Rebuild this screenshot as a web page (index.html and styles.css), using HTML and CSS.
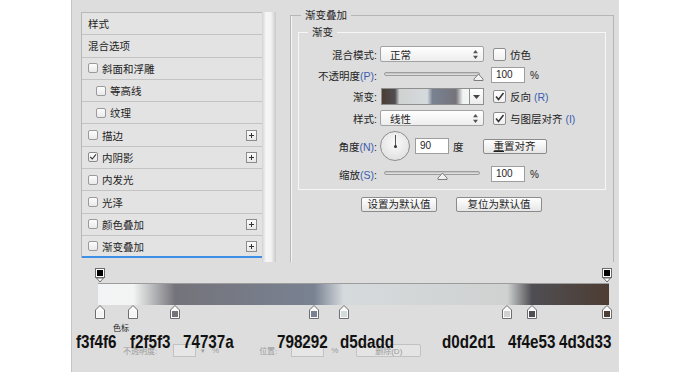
FILE: index.html
```html
<!DOCTYPE html>
<html lang="zh-CN">
<head>
<meta charset="utf-8">
<title>图层样式 - 渐变叠加</title>
<link rel="stylesheet" href="styles.css">
</head>
<body>
<div class="panel">
  <div class="top">
    <div class="list">
      <div class="row">样式</div>
      <div class="row">混合选项</div>
      <div class="row"><span class="cb"></span>斜面和浮雕</div>
      <div class="row ind"><span class="cb"></span>等高线</div>
      <div class="row ind"><span class="cb"></span>纹理</div>
      <div class="row"><span class="cb"></span>描边<span class="plus"></span></div>
      <div class="row"><span class="cb on"><svg width="10" height="10" viewBox="0 0 10 10"><path d="M1.5 4.8 L4 7.5 L8.8 1.8" fill="none" stroke="#333" stroke-width="1.4"/></svg></span>内阴影<span class="plus"></span></div>
      <div class="row"><span class="cb"></span>内发光</div>
      <div class="row"><span class="cb"></span>光泽</div>
      <div class="row"><span class="cb"></span>颜色叠加<span class="plus"></span></div>
      <div class="row sel"><span class="cb"></span>渐变叠加<span class="plus"></span></div>
    </div>
    <div class="vscroll"></div>
    <fieldset class="outer">
      <legend class="lg">渐变叠加</legend>
      <fieldset class="inner">
        <legend class="lg2">渐变</legend>
        <div class="frow">
          <span class="lb">混合模式:</span>
          <span class="select"><span class="sv">正常</span><svg class="arr" width="5" height="9" viewBox="0 0 5 9"><path d="M2.5 0 L5 3.2 H0 Z M2.5 9 L5 5.8 H0 Z" fill="#555"/></svg></span>
          <span class="chk"></span><span class="ct">仿色</span>
        </div>
        <div class="frow">
          <span class="lb">不透明度<span class="mn">(P)</span>:</span>
          <span class="slider"><span class="track"></span><svg class="thumb t-end" width="11" height="8" viewBox="0 0 11 8"><path d="M1 7.5 H10 V6 L5.5 1 L1 6 Z" fill="#f2f2f2" stroke="#7c7c7c"/></svg></span>
          <span class="inp">100</span><span class="pct">%</span>
        </div>
        <div class="frow r3">
          <span class="lb">渐变:</span>
          <span class="gpre"></span><span class="gdrop"><svg width="7" height="4" viewBox="0 0 7 4"><path d="M0 0 H7 L3.5 4 Z" fill="#444"/></svg></span>
          <span class="chk"><svg width="11" height="11" viewBox="0 0 11 11"><path d="M2 5.5 L4.5 8.5 L9.5 2" fill="none" stroke="#333" stroke-width="1.5"/></svg></span><span class="ct">反向 <span class="mn">(R)</span></span>
        </div>
        <div class="frow">
          <span class="lb">样式:</span>
          <span class="select"><span class="sv">线性</span><svg class="arr" width="5" height="9" viewBox="0 0 5 9"><path d="M2.5 0 L5 3.2 H0 Z M2.5 9 L5 5.8 H0 Z" fill="#555"/></svg></span>
          <span class="chk"><svg width="11" height="11" viewBox="0 0 11 11"><path d="M2 5.5 L4.5 8.5 L9.5 2" fill="none" stroke="#333" stroke-width="1.5"/></svg></span><span class="ct">与图层对齐 <span class="mn">(I)</span></span>
        </div>
        <div class="frow r5">
          <span class="lb">角度<span class="mn">(N)</span>:</span>
          <span class="dial"><span class="hand"></span><span class="dot"></span></span>
          <span class="inp i2">90</span><span class="deg">度</span>
          <span class="btn b0"><u>重</u>置对齐</span>
        </div>
        <div class="frow last">
          <span class="lb">缩放<span class="mn">(S)</span>:</span>
          <span class="slider"><span class="track"></span><svg class="thumb t-mid" width="11" height="8" viewBox="0 0 11 8"><path d="M1 7.5 H10 V6 L5.5 1 L1 6 Z" fill="#f2f2f2" stroke="#7c7c7c"/></svg></span>
          <span class="inp">100</span><span class="pct">%</span>
        </div>
      </fieldset>
      <div class="defaults">
        <span class="btn b1">设置为默认值</span>
        <span class="btn b2">复位为默认值</span>
      </div>
    </fieldset>
  </div>

  <div class="editor">
    <div class="ostops">
      <svg class="ostop" style="left:0.3%" width="10" height="15" viewBox="0 0 10 15"><rect x="0.5" y="0.5" width="9" height="9" fill="#fff" stroke="#6a6a6a"/><rect x="2" y="2" width="6" height="6" fill="#000"/><path d="M1.5 10 L5 14 L8.5 10 Z" fill="#fff" stroke="#6a6a6a"/></svg>
      <svg class="ostop" style="left:99.7%" width="10" height="15" viewBox="0 0 10 15"><rect x="0.5" y="0.5" width="9" height="9" fill="#fff" stroke="#6a6a6a"/><rect x="2" y="2" width="6" height="6" fill="#000"/><path d="M1.5 10 L5 14 L8.5 10 Z" fill="#fff" stroke="#6a6a6a"/></svg>
    </div>
    <div class="gbar"></div>
    <div class="cstops">
      <svg class="cstop" style="left:0.3%" width="10" height="14" viewBox="0 0 10 14"><path d="M0.5 5 L5 0.5 L9.5 5 V13.5 H0.5 Z" fill="#fafafa" stroke="#6e6e6e"/><rect x="2" y="6" width="6" height="6" fill="#f3f4f6"/></svg>
      <svg class="cstop" style="left:6.9%" width="10" height="14" viewBox="0 0 10 14"><path d="M0.5 5 L5 0.5 L9.5 5 V13.5 H0.5 Z" fill="#fafafa" stroke="#6e6e6e"/><rect x="2" y="6" width="6" height="6" fill="#f2f5f3"/></svg>
      <svg class="cstop" style="left:15.1%" width="10" height="14" viewBox="0 0 10 14"><path d="M0.5 5 L5 0.5 L9.5 5 V13.5 H0.5 Z" fill="#fafafa" stroke="#6e6e6e"/><rect x="2" y="6" width="6" height="6" fill="#74737a"/></svg>
      <svg class="cstop" style="left:42.3%" width="10" height="14" viewBox="0 0 10 14"><path d="M0.5 5 L5 0.5 L9.5 5 V13.5 H0.5 Z" fill="#fafafa" stroke="#6e6e6e"/><rect x="2" y="6" width="6" height="6" fill="#798292"/></svg>
      <svg class="cstop" style="left:48.1%" width="10" height="14" viewBox="0 0 10 14"><path d="M0.5 5 L5 0.5 L9.5 5 V13.5 H0.5 Z" fill="#fafafa" stroke="#6e6e6e"/><rect x="2" y="6" width="6" height="6" fill="#d5dadd"/></svg>
      <svg class="cstop" style="left:80.1%" width="10" height="14" viewBox="0 0 10 14"><path d="M0.5 5 L5 0.5 L9.5 5 V13.5 H0.5 Z" fill="#fafafa" stroke="#6e6e6e"/><rect x="2" y="6" width="6" height="6" fill="#d0d2d1"/></svg>
      <svg class="cstop" style="left:84.9%" width="10" height="14" viewBox="0 0 10 14"><path d="M0.5 5 L5 0.5 L9.5 5 V13.5 H0.5 Z" fill="#fafafa" stroke="#6e6e6e"/><rect x="2" y="6" width="6" height="6" fill="#4f4e53"/></svg>
      <svg class="cstop" style="left:99.7%" width="10" height="14" viewBox="0 0 10 14"><path d="M0.5 5 L5 0.5 L9.5 5 V13.5 H0.5 Z" fill="#fafafa" stroke="#6e6e6e"/><rect x="2" y="6" width="6" height="6" fill="#4d3d33"/></svg>
    </div>
    <div class="faded">
      <span class="fl">不透明度:</span><span class="fi"></span><span class="fdd">▾</span><span class="fp">%</span>
      <span class="fl f2">位置:</span><span class="fi fi2"></span><span class="fp">%</span>
      <span class="fb">删除(D)</span>
    </div>
    <div class="tags">
      <span class="small">色标</span>
      <span class="tag" style="left:4px">f3f4f6</span>
      <span class="tag" style="left:58px">f2f5f3</span>
      <span class="tag" style="left:111px">74737a</span>
      <span class="tag" style="left:205px">798292</span>
      <span class="tag" style="left:268px">d5dadd</span>
      <span class="tag" style="left:370px">d0d2d1</span>
      <span class="tag" style="left:436px">4f4e53</span>
      <span class="tag" style="left:487px">4d3d33</span>
    </div>
  </div>
</div>
</body>
</html>
```

FILE: styles.css
```css
* { box-sizing: border-box; }
html, body { margin: 0; padding: 0; background: #fff; }
body {
  width: 690px; height: 372px; overflow: hidden;
  font-family: "Liberation Sans", "Noto Sans CJK SC", sans-serif;
  font-size: 10.5px; color: #1e1e1e;
}
.panel {
  margin-left: 71px; width: 548px; height: 372px;
  background: #dddddd; border-left: 1px solid #c4c4c4;
  display: flex; flex-direction: column;
}
.top { height: 262px; flex: none; display: flex; padding: 8px 0 0 9px; }

/* style list */
.list {
  width: 181px; margin-top: 4px; align-self: flex-start;
  border-left: 1px solid #b8b8b8; border-top: 1px solid #b8b8b8;
  background: #e3e3e3;
}
.row {
  height: 22.3px; border-bottom: 1px solid #c3c3c3;
  display: flex; align-items: center; padding-left: 6px; white-space: nowrap;
}
.row.ind { padding-left: 14px; }
.row.sel { border-bottom: 2px solid #3d8fe8; }
.cb {
  width: 10px; height: 10px; border: 1px solid #9a9a9a; border-radius: 2px;
  background: linear-gradient(#fdfdfd, #e9e9e9); margin-right: 4px; flex: none;
  display: flex; align-items: center; justify-content: center;
}
.cb.on { border-color: #8a8a8a; }
.cb svg { display: block; }
.plus {
  margin-left: auto; margin-right: 5px; width: 11px; height: 11px;
  border: 1px solid #8c8c8c; background: linear-gradient(#fbfbfb, #e8e8e8); position: relative;
}
.plus::before, .plus::after { content: ""; position: absolute; background: #333; }
.plus::before { left: 2px; top: 4px; width: 5px; height: 1px; }
.plus::after { left: 4px; top: 2px; width: 1px; height: 5px; }

.vscroll {
  width: 14px; margin-top: 4px;
  background: linear-gradient(90deg, #d2d2d2, #f7f7f7 30%, #f2f2f2 65%, #c8c8c8);
}

/* fieldsets */
.outer {
  margin: 0 0 0 14px; width: 324px; padding: 0; min-width: 0;
  border: 1px solid #b6b6b6; border-bottom: 0;
  box-shadow: 1px 0 0 #f4f4f4 inset;
}
.lg { margin-left: 10px; padding: 0 4px; line-height: 14px; }
.inner {
  margin: 3px 7px 0 7px; padding: 7px 0 7px 0; min-width: 0;
  border: 1px solid #f6f6f6;
}
.lg2 { margin-left: 9px; padding: 0 4px; line-height: 14px; }
.mn { color: #3b5cae; }

.frow { display: flex; align-items: center; height: 16px; margin-bottom: 5px; white-space: nowrap; }
.frow.r3 { height: 17px; }
.frow.r5 { height: 30px; }
.frow.last { margin-bottom: 0; }
.lb { width: 81px; text-align: right; padding-right: 3px; flex: none; }

.select {
  width: 104px; height: 16px; flex: none;
  border: 1px solid #a2a2a2; border-radius: 2px;
  background: linear-gradient(#ffffff, #ededed);
  display: flex; align-items: center; padding: 0 5px 0 9px;
}
.sv { flex: 1; }
.arr { display: block; }
.chk {
  width: 13px; height: 13px; margin-left: 9px; flex: none;
  border: 1px solid #8d8d8d; border-radius: 2px; background: linear-gradient(#fff, #efefef);
  display: flex; align-items: center; justify-content: center;
}
.chk svg { display: block; }
.ct { margin-left: 4px; }

.slider { width: 104px; height: 16px; flex: none; position: relative; }
.track {
  position: absolute; left: 4px; right: 4px; top: 5px; height: 4px;
  border: 1px solid #9d9d9d; border-radius: 2px;
  background: linear-gradient(#bdbdbd, #e6e6e6);
}
.thumb { position: absolute; top: 6px; display: block; }
.t-end { left: 93px; }
.t-mid { left: 57px; }

.inp {
  width: 34px; height: 16px; margin-left: 7px; flex: none;
  border: 1px solid #9d9d9d; background: #fff;
  font-family: "Liberation Sans", sans-serif; font-size: 10px;
  padding-left: 4px; line-height: 14px;
}
.inp.i2 { margin-left: 5px; }
.pct { margin-left: 5px; font-size: 10px; }
.deg { margin-left: 4px; }

.gpre {
  width: 89px; height: 17px; margin-left: 1px; flex: none;
  border: 1px solid #8f8f8f;
  background: linear-gradient(90deg, #4d3d33 0%, #4f4e53 15%, #d0d2d1 20%, #d5dadd 52%, #798292 58%, #74737a 85%, #f2f5f3 93%, #f3f4f6 100%);
}
.gdrop {
  width: 14px; height: 17px; flex: none; border: 1px solid #8f8f8f; border-left: 0;
  background: linear-gradient(#fff, #ececec);
  display: flex; align-items: center; justify-content: center;
}
.gdrop svg { display: block; }

.dial {
  width: 30px; height: 30px; flex: none; border-radius: 50%;
  border: 1px solid #8e8e8e;
  background: radial-gradient(circle at 50% 40%, #fbfbfb, #e2e2e2 75%);
  position: relative;
}
.hand { position: absolute; left: 14px; top: 3px; width: 1px; height: 11px; background: #555; }
.dot { position: absolute; left: 13px; top: 13px; width: 3px; height: 3px; background: #333; border-radius: 50%; }

.btn {
  height: 15px; flex: none; border: 1px solid #8b8b8b; border-radius: 2px;
  background: linear-gradient(#ffffff, #e6e6e6);
  display: flex; align-items: center; justify-content: center;
  line-height: 13px;
}
.btn u { text-decoration: underline; }
.b0 { width: 64px; margin-left: 19px; }
.defaults { display: flex; padding-left: 70px; margin-top: 7px; gap: 19px; }
.b1 { width: 76px; }
.b2 { width: 86px; }

/* gradient editor */
.editor { flex: 1; position: relative; padding-left: 26px; }
.ostops { width: 511px; height: 15px; margin-top: 6px; position: relative; }
.ostop { position: absolute; top: 0; transform: translateX(-50%); display: block; }
.gbar {
  width: 511px; height: 22px;
  border-top: 1px solid #9c9c9c;
  background: linear-gradient(90deg, #f3f4f6 0.3%, #f2f5f3 6.9%, #74737a 15.1%, #798292 42.3%, #d5dadd 48.1%, #d0d2d1 80.1%, #4f4e53 84.9%, #4d3d33 99.7%);
}
.cstops { width: 511px; height: 14px; position: relative; }
.cstop { position: absolute; top: 0; transform: translateX(-50%); display: block; }

.faded {
  display: flex; align-items: center; margin-top: 25px; padding-left: 25px;
  height: 13px; font-size: 8px; color: #9a9a9a; white-space: nowrap;
}
.fl { width: 40px; }
.fi { width: 23px; height: 13px; border: 1px solid #c2c2c2; background: #e6e6e6; margin-left: 10px; }
.fi2 { width: 33px; margin-left: 7px; }
.fdd { margin-left: 5px; font-size: 7px; }
.fp { margin-left: 7px; }
.f2 { margin-left: 40px; width: 25px; }
.fb {
  margin-left: 18px; width: 65px; height: 13px; border: 1px solid #c2c2c2; border-radius: 2px;
  background: #e4e4e4; display: flex; align-items: center; justify-content: center;
}

.tags { position: absolute; left: 0; top: 0; right: 0; bottom: 0; pointer-events: none; }
.tag {
  position: absolute; top: 70px;
  font-family: "Liberation Sans", sans-serif; font-weight: bold;
  font-size: 19px; line-height: 19px; color: #111;
  transform: scaleX(0.8); transform-origin: 0 0;
}
.small { position: absolute; left: 41px; top: 62px; font-size: 8px; line-height: 9px; color: #222; }
```
